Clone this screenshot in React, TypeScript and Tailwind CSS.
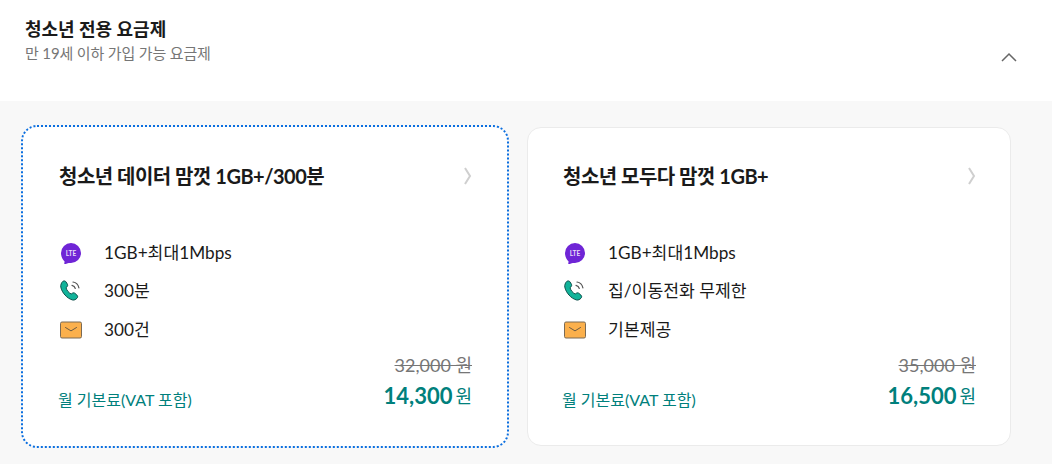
const plans = [
  {
    id: 1,
    name: '청소년 데이터 맘껏 1GB+/300분',
    data: '1GB+최대1Mbps',
    call: '300분',
    sms: '300건',
    original: '32,000',
    price: '14,300',
    focused: true,
  },
  {
    id: 2,
    name: '청소년 모두다 맘껏 1GB+',
    data: '1GB+최대1Mbps',
    call: '집/이동전화 무제한',
    sms: '기본제공',
    original: '35,000',
    price: '16,500',
    focused: false,
  },
];

function LteIcon() {
  return (
    <svg width="24" height="24" viewBox="0 0 24 24">
      <path d="M12 2a10 10 0 0 1 0 20c-1.6 0-3 0-4 .4-.8.3-2.2.9-2.6.5-.4-.4.2-1.400.2-2.400C3.500 18.700 2 15.500 2 12A10 10 0 0 1 12 2z" fill="#6f25d6" />
      <text x="12" y="14.500" textAnchor="middle" fontSize="6.500" fontWeight="700" fill="#e8dcf8" fontFamily="Lato, sans-serif">LTE</text>
    </svg>
  );
}

function PhoneIcon() {
  return (
    <svg width="24" height="24" viewBox="0 0 24 24" fill="none">
      <path d="M3.800 2.400c1.100-.8 2.600-.6 3.300.6l1.300 2.200c.5.900.3 2-.5 2.700l-.9.8c.7 2.700 2.800 5.200 5.200 6.300l1.200-.8c.8-.5 1.900-.5 2.600.2l1.900 1.700c1 .9 1 2.300.1 3.100-1.100 1.100-2.700 2.200-4.300 1.800C8 19.600 2.900 13.600 1.800 8.100 1.400 6.200 2.500 3.400 3.800 2.400z" fill="#12b39a" stroke="#0d4f4a" strokeWidth="1" />
      <path d="M13 6.400c1.600.3 2.900 1.400 3.300 3.100M14 3c3 .5 5.300 2.800 5.900 5.900" stroke="#555" strokeWidth="1.200" strokeLinecap="round" />
    </svg>
  );
}

function MailIcon() {
  return (
    <svg width="24" height="24" viewBox="0 0 24 24" fill="none">
      <rect x="1.500" y="4" width="21" height="16" rx="1.500" fill="#fbb04c" stroke="#7a6a55" strokeWidth="1" />
      <path d="M6.500 9.500l5.500 3.400 5.500-3.400" stroke="#6b5a42" strokeWidth="1" strokeLinecap="round" />
    </svg>
  );
}

function Feature({ icon, label }: { icon: React.ReactNode; label: string }) {
  return (
    <li className="flex h-[24px] items-center">
      <span className="flex w-[24px] justify-center">{icon}</span>
      <span className="ml-[21px] text-[17.200px] leading-[24px] text-[#1a1a1a]">{label}</span>
    </li>
  );
}

export default function App() {
  return (
    <div className="h-[464px] w-[1052px] overflow-hidden bg-white font-['Lato','Noto_Sans_CJK_KR',sans-serif]">
      <header className="flex h-[101px] items-start justify-between pl-[25px] pr-[35px]">
        <div className="pt-[17px]">
          <h2 className="text-[18px] leading-[24px] font-bold text-[#1a1a1a]">청소년 전용 요금제</h2>
          <p className="mt-[1px] text-[15px] leading-[22px] tracking-[-0.15px] text-[#767676]">만 19세 이하 가입 가능 요금제</p>
        </div>
        <svg className="mt-[51px]" width="16" height="12" viewBox="0 0 16 12" fill="none">
          <path d="M1 10l7-7 7 7" stroke="#666" strokeWidth="1.500" />
        </svg>
      </header>

      <main className="flex h-[363px] gap-[20px] bg-[#f8f8f8] pl-[23px] pt-[26px]">
        {plans.map((plan) => (
          <article
            key={plan.id}
            className={`h-[319px] w-[484px] rounded-[14px] border bg-white pl-[35px] pr-[34px] pt-[33px] ${
              plan.focused
                ? 'border-transparent outline-2 outline-offset-0 outline-[#0b6fe0] outline-dotted'
                : 'border-[#ebebeb]'
            }`}
          >
            <div className="flex items-center justify-between">
              <h3 className="text-[20px] leading-[30px] font-bold tracking-[-0.5px] text-[#1a1a1a]">{plan.name}</h3>
              <svg width="10" height="18" viewBox="0 0 10 18" fill="none">
                <path d="M3 1l5 8-5 8" stroke="#cfcfcf" strokeWidth="2" />
              </svg>
            </div>

            <ul className="mt-[49.700px] flex flex-col gap-[14.500px]">
              <Feature icon={<LteIcon />} label={plan.data} />
              <Feature icon={<PhoneIcon />} label={plan.call} />
              <Feature icon={<MailIcon />} label={plan.sms} />
            </ul>

            <div className="mt-[10.300px] flex items-end justify-between">
              <span className="-ml-[1px] text-[16px] leading-[24px] text-[#00807c]">월 기본료(VAT 포함)</span>
              <div className="flex flex-col items-end">
                <span className="text-[18px] leading-[26px] text-[#767676] line-through">{plan.original} 원</span>
                <span className="mt-[2px] flex h-[32px] items-center text-[#00807c]">
                  <strong className="text-[22px] leading-[32px] font-bold">{plan.price}</strong>
                  <span className="ml-[3px] text-[18px] leading-[32px]">원</span>
                </span>
              </div>
            </div>
          </article>
        ))}
      </main>
    </div>
  );
}
